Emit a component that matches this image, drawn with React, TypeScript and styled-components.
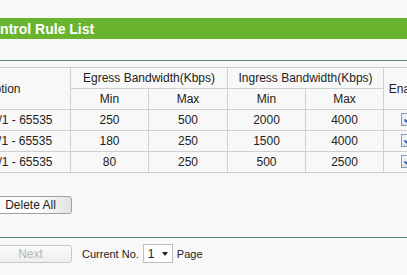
import React from "react";
import { styled, createGlobalStyle } from "styled-components";

const GlobalStyle = createGlobalStyle`
  html, body {
    margin: 0;
    padding: 0;
    background-color: #f8f8f8;
    overflow: hidden;
  }
  body {
    font-family: "Liberation Sans", Arial, sans-serif;
    font-size: 12px;
    color: #222;
  }
`;

const Page = styled.main`
  width: 680px;
  margin-left: -120px;
  padding-top: 18px;
`;

const TitleBar = styled.h1`
  height: 21px;
  margin: 0;
  padding-left: 26px;
  display: flex;
  align-items: center;
  background-color: #68b42f;
  color: #fff;
  font-size: 14px;
  font-weight: bold;
`;

const Divider = styled.hr<{ $top: number }>`
  margin: ${(p) => p.$top}px 0 0 0;
  border: none;
  height: 1px;
  background-color: #4f8a63;
`;

const RuleTable = styled.table`
  margin: 6px 0 0 20px;
  border-collapse: collapse;
  table-layout: fixed;
  width: 632px;
`;

const Cell = styled.td<{ $padLeft?: number }>`
  height: 20px;
  padding: 0 0 0 ${(p) => p.$padLeft ?? 0}px;
  border: 1px solid #cfcfcf;
  text-align: center;
  vertical-align: middle;
  white-space: nowrap;
  line-height: 20px;
  font-weight: normal;
`;

const Check = styled.span`
  display: inline-block;
  width: 11px;
  height: 11px;
  border: 1px solid #8c9bb3;
  background: linear-gradient(#f4f6fa, #d9dfea);
  vertical-align: middle;
  position: relative;
  top: -1px;

  svg {
    display: block;
  }
`;

const ActionRow = styled.div`
  display: flex;
  gap: 6px;
  margin: 23px 0 0 20px;
`;

const Button = styled.button<{ $disabled?: boolean }>`
  width: 83px;
  height: 18px;
  padding: 0;
  border: 1px solid ${(p) => (p.$disabled ? "#c9c9c9" : "#9f9f9f")};
  border-radius: 3px;
  background: ${(p) =>
    p.$disabled
      ? "linear-gradient(#fbfbfb, #eeeeee)"
      : "linear-gradient(90deg, #fdfdfd 60%, #e2e2e2)"};
  color: ${(p) => (p.$disabled ? "#b5b5b5" : "#222")};
  font-family: "Liberation Sans", Arial, sans-serif;
  font-size: 12px;
`;

const PagerRow = styled.div`
  display: flex;
  align-items: center;
  gap: 4px;
  margin: 6px 0 0 20px;

  & > button + button {
    margin-left: 2px;
  }
`;

const Label = styled.span<{ $left?: number }>`
  margin-left: ${(p) => p.$left ?? 0}px;
  font-size: 11px;
  color: #222;
`;

const PageSelect = styled.div`
  height: 17px;
  width: 20px;
  padding: 0 4px;
  border: 1px solid #bdbdbd;
  background-color: #fff;
  display: flex;
  align-items: center;
  justify-content: space-between;
  font-size: 12px;

  &::after {
    content: "";
    border-left: 3px solid transparent;
    border-right: 3px solid transparent;
    border-top: 4px solid #222;
  }
`;

const rules = [
  { desc: "192.168.1.10/1 - 65535", eMin: 250, eMax: 500, iMin: 2000, iMax: 4000 },
  { desc: "192.168.1.11/1 - 65535", eMin: 180, eMax: 250, iMin: 1500, iMax: 4000 },
  { desc: "192.168.1.12/1 - 65535", eMin: 80, eMax: 250, iMin: 500, iMax: 2500 },
];

function CheckMark() {
  return (
    <Check>
      <svg width="11" height="11" viewBox="0 0 11 11">
        <path d="M2.5 5.5 L4.5 7.5 L8.5 3" fill="none" stroke="#2b58b8" strokeWidth="1.6" />
      </svg>
    </Check>
  );
}

function App() {
  return (
    <>
      <GlobalStyle />
      <Page>
        <TitleBar>Bandwidth Control Rule List</TitleBar>
        <Divider $top={21} />
        <RuleTable>
          <colgroup>
            <col style={{ width: 170 }} />
            <col style={{ width: 78 }} />
            <col style={{ width: 79 }} />
            <col style={{ width: 78 }} />
            <col style={{ width: 78 }} />
            <col style={{ width: 48 }} />
            <col style={{ width: 101 }} />
          </colgroup>
          <thead>
            <tr>
              <Cell as="th" rowSpan={2} $padLeft={10}>
                Description
              </Cell>
              <Cell as="th" colSpan={2}>
                Egress Bandwidth(Kbps)
              </Cell>
              <Cell as="th" colSpan={2}>
                Ingress Bandwidth(Kbps)
              </Cell>
              <Cell as="th" rowSpan={2}>
                Enable
              </Cell>
              <Cell as="th" rowSpan={2}>
                Modify
              </Cell>
            </tr>
            <tr>
              <Cell>Min</Cell>
              <Cell>Max</Cell>
              <Cell>Min</Cell>
              <Cell>Max</Cell>
            </tr>
          </thead>
          <tbody>
            {rules.map((r) => (
              <tr key={r.desc}>
                <Cell $padLeft={10}>{r.desc}</Cell>
                <Cell>{r.eMin}</Cell>
                <Cell>{r.eMax}</Cell>
                <Cell>{r.iMin}</Cell>
                <Cell>{r.iMax}</Cell>
                <Cell>
                  <CheckMark />
                </Cell>
                <Cell>Modify Delete</Cell>
              </tr>
            ))}
          </tbody>
        </RuleTable>
        <ActionRow>
          <Button>Add New</Button>
          <Button>Delete All</Button>
        </ActionRow>
        <Divider $top={23} />
        <PagerRow>
          <Button $disabled>Previous</Button>
          <Button $disabled>Next</Button>
          <Label $left={6}>Current No.</Label>
          <PageSelect>1</PageSelect>
          <Label>Page</Label>
        </PagerRow>
      </Page>
    </>
  );
}

export default App;
